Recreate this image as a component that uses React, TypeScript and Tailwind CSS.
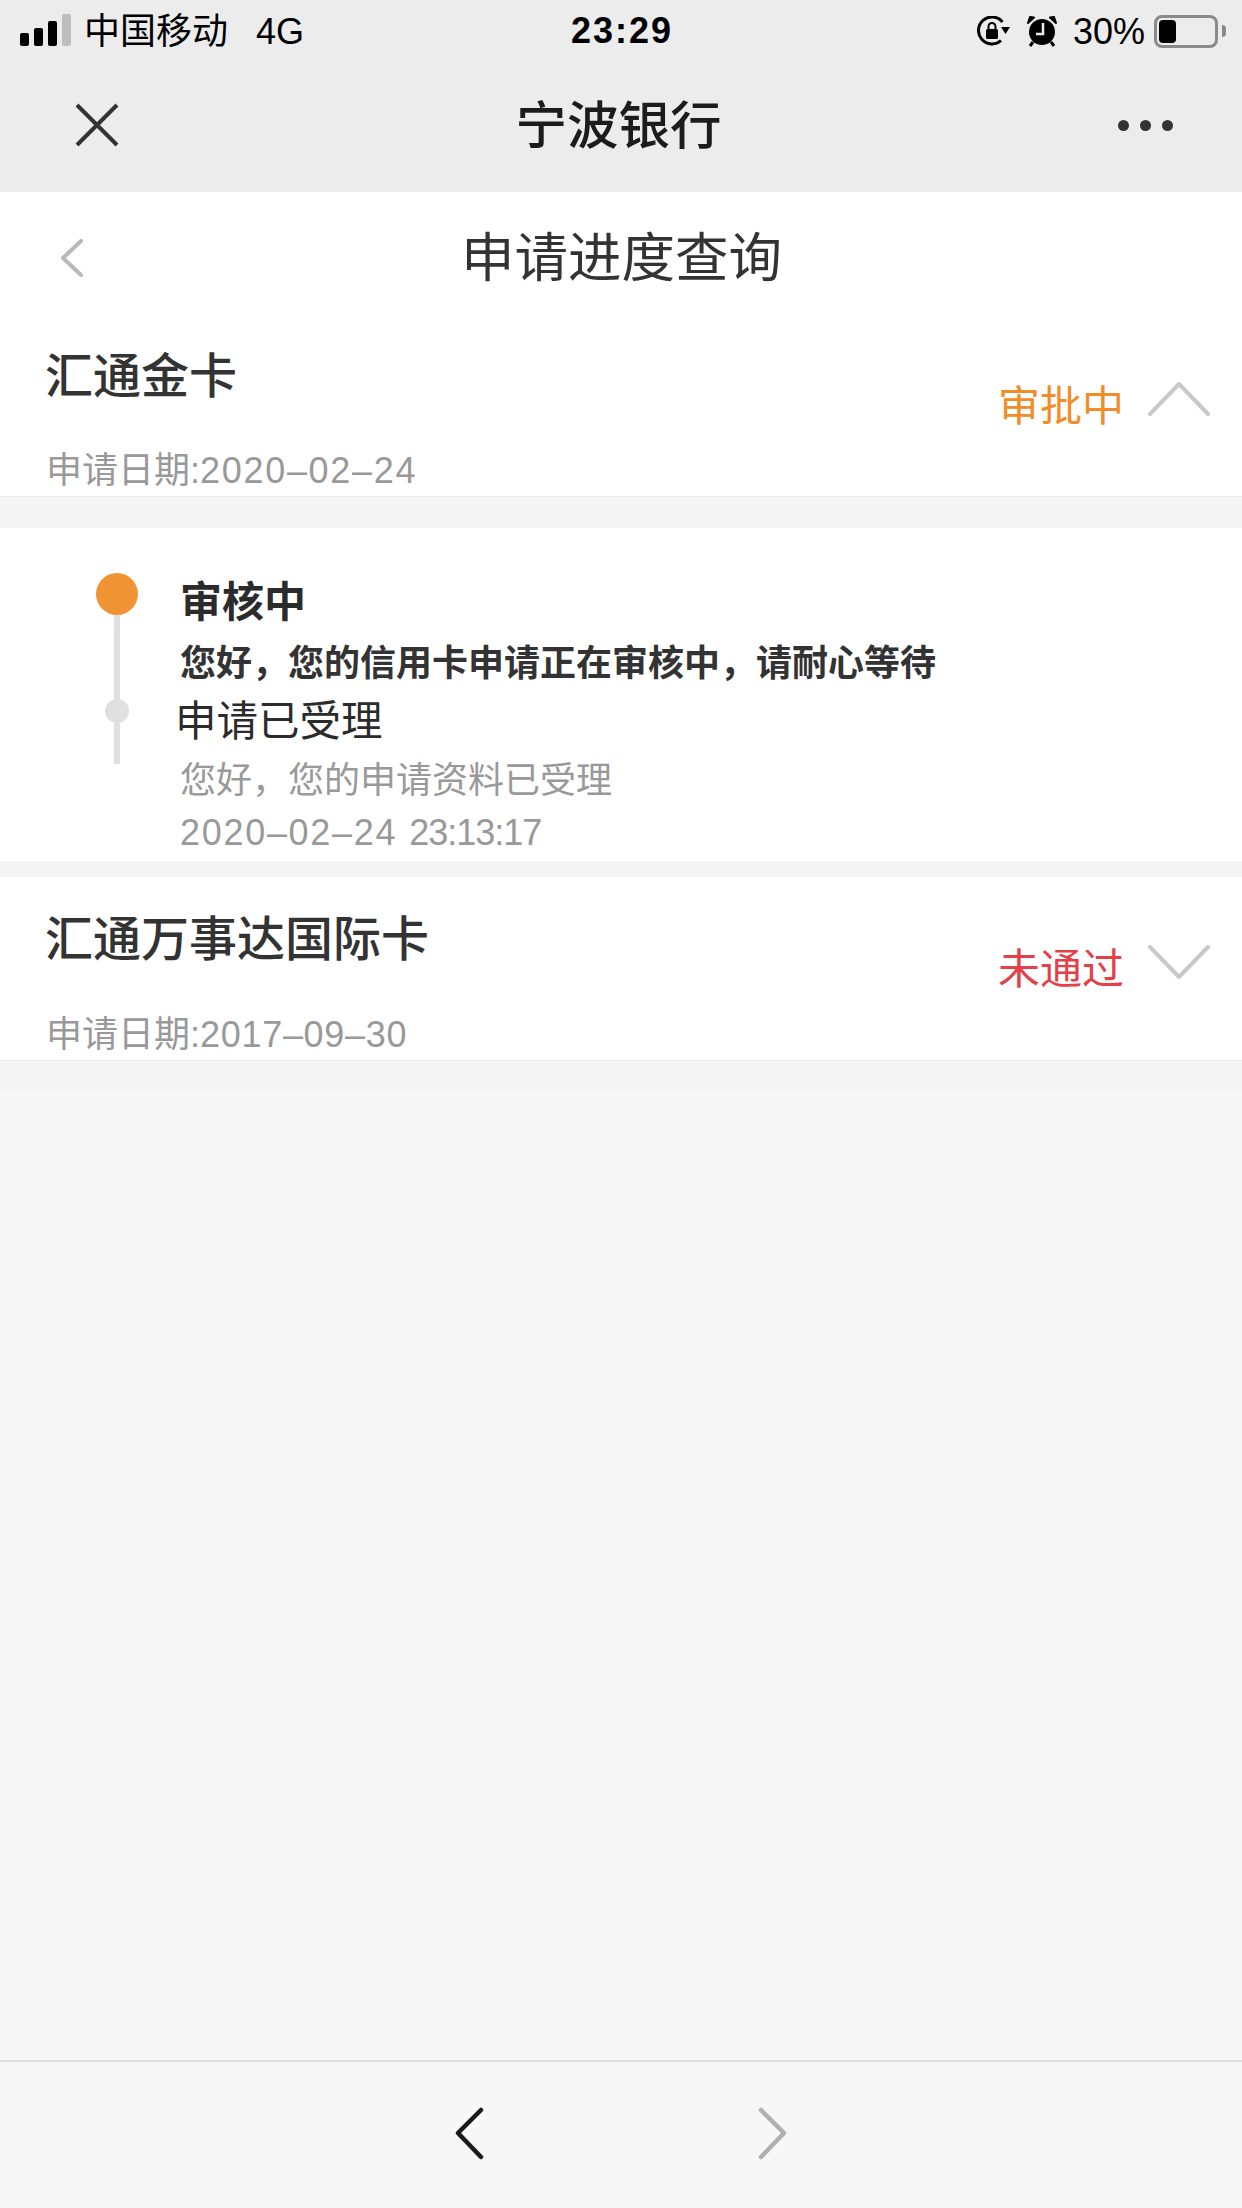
import React from "react";

const FONT = "font-['Liberation_Sans','Noto_Sans_CJK_SC',sans-serif]";

function Chevron({ up }: { up: boolean }) {
  return (
    <svg width="62" height="34" viewBox="0 0 62 34" fill="none" className="mr-[32px] ml-[24px] -mt-[4px] shrink-0">
      <path
        d={up ? "M2 32 L31 2 L60 32" : "M2 2 L31 32 L60 2"}
        stroke="#c9c9c9"
        strokeWidth="4"
        strokeLinecap="round"
        strokeLinejoin="round"
      />
    </svg>
  );
}

function CardRow({
  title,
  dateLabel,
  date,
  dateClass,
  status,
  statusClass,
  up,
  topClass,
  gapClass,
}: {
  title: string;
  dateLabel: string;
  date: string;
  dateClass: string;
  status: string;
  statusClass: string;
  up: boolean;
  topClass: string;
  gapClass: string;
}) {
  return (
    <div className={`flex justify-between bg-white border-b border-[#ebebeb] ${topClass}`}>
      <div className="pl-[46px]">
        <div className="text-[48px] leading-[48px] font-medium text-[#333] -ml-[1px]">{title}</div>
        <div className={`text-[36px] leading-[36px] text-[#999] ${gapClass}`}>
          {dateLabel}
          <span className={dateClass}>{date}</span>
        </div>
      </div>
      <div className="flex items-start mt-[33px]">
        <div className={`text-[42px] leading-[42px] ${statusClass}`}>{status}</div>
        <Chevron up={up} />
      </div>
    </div>
  );
}

export default function App() {
  return (
    <div className={`w-[1242px] h-[2208px] flex flex-col bg-[#f7f7f7] overflow-hidden ${FONT}`}>
      {/* status bar */}
      <div className="h-[62px] bg-[#ececec] flex items-center text-black text-[36px] leading-[36px]">
        <div className="flex-1 flex items-center pl-[20px]">
          <div className="flex items-end gap-[5px] h-[32px] mt-[-2px]">
            <div className="w-[9px] h-[13px] bg-black rounded-[2px]" />
            <div className="w-[9px] h-[18px] bg-black rounded-[2px]" />
            <div className="w-[9px] h-[25px] bg-black rounded-[2px]" />
            <div className="w-[9px] h-[32px] bg-[#bdbdbd] rounded-[2px]" />
          </div>
          <span className="ml-[13px] w-[172px] mt-[2px]">中国移动</span>
          <span className="mt-[2px]">4G</span>
        </div>
        <div className="font-bold tracking-[2px] -ml-[2px]">23:29</div>
        <div className="flex-1 flex items-center justify-end pr-[16px]">
          <svg width="33" height="30" viewBox="0 0 33 30" fill="none" className="shrink-0">
            <path d="M24 24.5 A13.5 13.5 0 1 1 25.5 6" stroke="#000" strokeWidth="3" />
            <path d="M24 11 L33 11 L28.5 18 Z" fill="#000" />
            <rect x="9" y="13" width="12" height="10" rx="1.5" fill="#000" />
            <path d="M11.5 13 V10.5 A3.5 3.5 0 0 1 18.5 10.5 V13" stroke="#000" strokeWidth="2" />
          </svg>
          <svg width="30" height="31" viewBox="0 0 30 31" className="ml-[17px] shrink-0">
            <circle cx="15" cy="16" r="13" fill="#000" />
            <path d="M1 7 L7 1.5 L3 1 Z M29 7 L23 1.5 L27 1 Z" fill="#000" stroke="#000" strokeWidth="2" strokeLinejoin="round" />
            <path d="M6 26 L3 30 M24 26 L27 30" stroke="#000" strokeWidth="3" />
            <path d="M16 7 V18 H9" stroke="#ececec" strokeWidth="2.5" fill="none" />
          </svg>
          <span className="ml-[16px] w-[81px] mt-[1px]">30%</span>
          <div className="w-[64px] h-[33px] border-[3px] border-[#8a8a8a] rounded-[8px] p-[2px]">
            <div className="w-[17px] h-full bg-black rounded-[4px]" />
          </div>
          <div className="ml-[4px] w-[4px] h-[12px] bg-[#8a8a8a] rounded-r-[4px]" />
        </div>
      </div>

      {/* nav bar */}
      <div className="h-[130px] bg-[#ececec] flex items-center justify-between pb-[4px]">
        <svg width="44" height="44" viewBox="0 0 44 44" className="ml-[75px] shrink-0">
          <path d="M2 2 L42 42 M42 2 L2 42" stroke="#333" strokeWidth="4" />
        </svg>
        <div className="text-[51.5px] leading-[56px] font-medium text-[#1c1c1c] mt-[2px]">宁波银行</div>
        <div className="flex gap-[11px] mr-[69px]">
          <div className="w-[11px] h-[11px] rounded-full bg-[#333]" />
          <div className="w-[11px] h-[11px] rounded-full bg-[#333]" />
          <div className="w-[11px] h-[11px] rounded-full bg-[#333]" />
        </div>
      </div>

      {/* page header */}
      <div className="h-[130px] bg-white flex items-center relative">
        <svg width="24" height="38" viewBox="0 0 24 38" className="ml-[60px] mt-[2px] shrink-0">
          <path d="M21 2 L3 19 L21 36" stroke="#b9b9b9" strokeWidth="4" fill="none" strokeLinecap="round" strokeLinejoin="round" />
        </svg>
        <div className="absolute left-[461px] top-[37px] text-[53.5px] leading-[60px] text-[#333]">申请进度查询</div>
      </div>

      <CardRow
        title="汇通金卡"
        dateLabel="申请日期:"
        date="2020–02–24"
        dateClass="tracking-[1.7px]"
        status="审批中"
        statusClass="text-[#f28c28]"
        up
        topClass="pt-[31px] pb-[7px]"
        gapClass="mt-[52px]"
      />

      <div className="h-[31px] bg-[#f5f5f5]" />

      {/* timeline panel */}
      <div className="h-[333px] bg-white flex pl-[96px]">
        <div className="w-[42px] pt-[45px] flex flex-col items-center shrink-0">
          <div className="w-[42px] h-[42px] rounded-full bg-[#f09433]" />
          <div className="w-[6px] h-[84px] bg-[#e0e0e0]" />
          <div className="w-[24px] h-[24px] rounded-full bg-[#e0e0e0]" />
          <div className="w-[6px] h-[41px] bg-[#e0e0e0]" />
        </div>
        <div className="ml-[42px] pt-[55px]">
          <div className="text-[42px] leading-[40px] font-bold text-[#2b2b2b]">审核中</div>
          <div className="mt-[23px] text-[36px] leading-[36px] font-bold text-[#333]">您好，您的信用卡申请正在审核中，请耐心等待</div>
          <div className="mt-[19px] -ml-[5px] text-[41.5px] leading-[42px] text-[#2b2b2b]">申请已受理</div>
          <div className="mt-[20px] text-[36px] leading-[36px] text-[#999]">您好，您的申请资料已受理</div>
          <div className="mt-[16px] text-[36px] leading-[36px] text-[#999] flex gap-[12px]">
            <span className="tracking-[1.7px]">2020–02–24</span>
            <span className="tracking-[-1px]">23:13:17</span>
          </div>
        </div>
      </div>

      <div className="h-[16px] bg-[#f5f5f5]" />

      <CardRow
        title="汇通万事达国际卡"
        dateLabel="申请日期:"
        date="2017–09–30"
        dateClass="tracking-[0.7px]"
        status="未通过"
        statusClass="text-[#e5404a]"
        up={false}
        topClass="pt-[39px] pb-[7px]"
        gapClass="mt-[53px]"
      />

      <div className="h-[32px] bg-[#f5f5f5]" />
      <div className="flex-1" />

      {/* bottom toolbar */}
      <div className="h-[148px] border-t-2 border-[#dedede] flex items-start pt-[45px]">
        <svg width="30" height="54" viewBox="0 0 30 54" className="ml-[454px] shrink-0">
          <path d="M27 3 L4 26 L27 50" stroke="#1a1a1a" strokeWidth="4.5" fill="none" strokeLinecap="round" strokeLinejoin="round" />
        </svg>
        <svg width="30" height="54" viewBox="0 0 30 54" className="ml-[274px] shrink-0">
          <path d="M3 3 L26 26 L3 50" stroke="#b0b0b0" strokeWidth="4.5" fill="none" strokeLinecap="round" strokeLinejoin="round" />
        </svg>
      </div>
    </div>
  );
}
